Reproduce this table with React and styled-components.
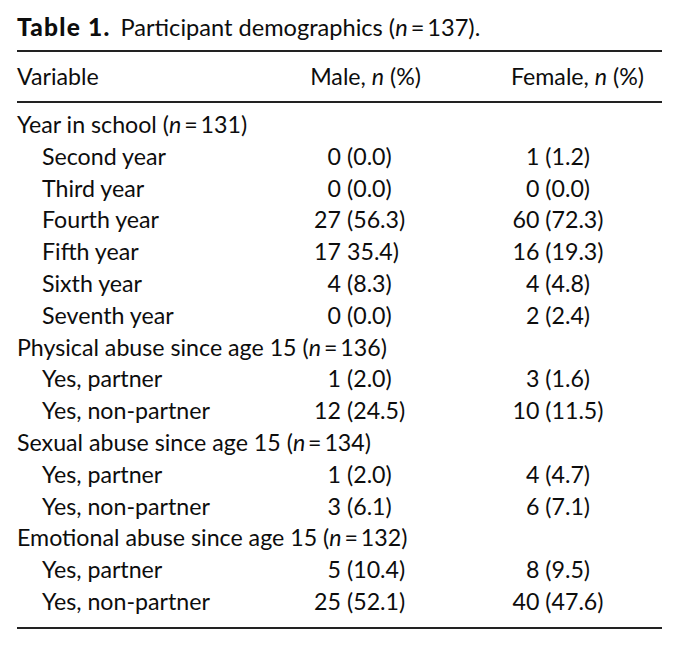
import React from "react";
import styled, { createGlobalStyle } from "styled-components";

const Global = createGlobalStyle`
  html, body { margin: 0; padding: 0; background: #ffffff; }
  body { font-family: Lato, "Open Sans", sans-serif; color: #0d0d0d; }
`;

const Page = styled.div`
  width: 645px;
  padding: 13px 0 0 17px;
`;

const Caption = styled.div`
  font-size: 23.6px;
  line-height: 28px;
  height: 37px;
  white-space: nowrap;
`;

const CaptionLabel = styled.span`
  font-weight: 900;
  font-size: 24.5px;
  letter-spacing: 1.2px;
  margin-right: 10px;
`;

const Table = styled.div`
  border-top: 2px solid #222222;
  border-bottom: 2px solid #222222;
  font-size: 23.2px;
`;

const HeaderRow = styled.div`
  display: grid;
  grid-template-columns: 1fr 130px 223px 18px;
  line-height: 32px;
  padding: 8px 0 9px;
  border-bottom: 2px solid #222222;
`;

const HeadCell = styled.div`
  text-align: ${(p) => (p.$right ? "right" : "left")};
  white-space: nowrap;
`;

const Body = styled.div`
  padding: 6px 0 9px;
`;

const Row = styled.div`
  display: grid;
  grid-template-columns: 273px 51px 129px 176px 16px;
  line-height: 31.8px;
  white-space: nowrap;
`;

const GroupRow = styled.div`
  line-height: 31.8px;
  white-space: nowrap;
`;

const Label = styled.div`
  padding-left: ${(p) => (p.$indent ? "25px" : "0")};
`;

const Num = styled.div`
  text-align: right;
`;

const Pct = styled.div`
  padding-left: 6px;
`;

const Center = styled.div`
  text-align: center;
`;

const N = () => (
  <>
    <i>n</i>
    {"\u2009=\u2009"}
  </>
);

const groups = [
  {
    title: "Year in school",
    n: "131",
    rows: [
      ["Second year", "0", "(0.0)", "1 (1.2)"],
      ["Third year", "0", "(0.0)", "0 (0.0)"],
      ["Fourth year", "27", "(56.3)", "60 (72.3)"],
      ["Fifth year", "17", "35.4)", "16 (19.3)"],
      ["Sixth year", "4", "(8.3)", "4 (4.8)"],
      ["Seventh year", "0", "(0.0)", "2 (2.4)"],
    ],
  },
  {
    title: "Physical abuse since age 15",
    n: "136",
    rows: [
      ["Yes, partner", "1", "(2.0)", "3 (1.6)"],
      ["Yes, non-partner", "12", "(24.5)", "10 (11.5)"],
    ],
  },
  {
    title: "Sexual abuse since age 15",
    n: "134",
    rows: [
      ["Yes, partner", "1", "(2.0)", "4 (4.7)"],
      ["Yes, non-partner", "3", "(6.1)", "6 (7.1)"],
    ],
  },
  {
    title: "Emotional abuse since age 15",
    n: "132",
    rows: [
      ["Yes, partner", "5", "(10.4)", "8 (9.5)"],
      ["Yes, non-partner", "25", "(52.1)", "40 (47.6)"],
    ],
  },
];

export default function App() {
  return (
    <Page>
      <Global />
      <Caption>
        <CaptionLabel>Table 1.</CaptionLabel>
        Participant demographics (<N />137).
      </Caption>
      <Table>
        <HeaderRow>
          <HeadCell>Variable</HeadCell>
          <HeadCell $right>
            Male, <i>n</i> (%)
          </HeadCell>
          <HeadCell $right>
            Female, <i>n</i> (%)
          </HeadCell>
          <div />
        </HeaderRow>
        <Body>
          {groups.map((g) => (
            <React.Fragment key={g.title}>
              <GroupRow>
                {g.title} (<N />
                {g.n})
              </GroupRow>
              {g.rows.map((r) => (
                <Row key={g.title + r[0]}>
                  <Label $indent>{r[0]}</Label>
                  <Num>{r[1]}</Num>
                  <Pct>{r[2]}</Pct>
                  <Center>{r[3]}</Center>
                  <div />
                </Row>
              ))}
            </React.Fragment>
          ))}
        </Body>
      </Table>
    </Page>
  );
}
